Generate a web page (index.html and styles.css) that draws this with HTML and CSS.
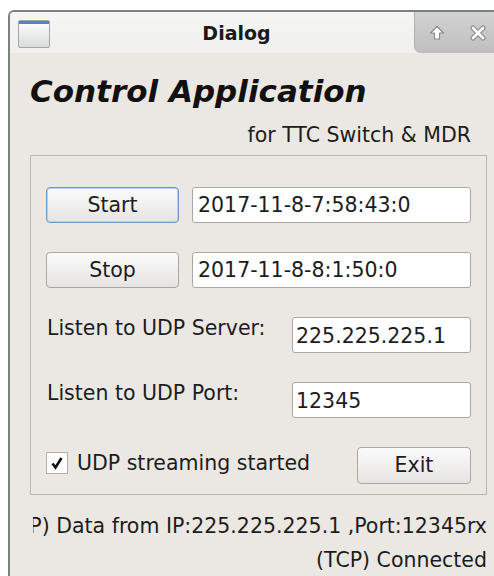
FILE: index.html
```html
<!DOCTYPE html>
<html>
<head>
<meta charset="utf-8">
<link rel="stylesheet" href="styles.css">
<title>Dialog</title>
</head>
<body>
<div class="window">
  <div class="titlebar">
    <svg class="app-icon" width="32" height="28" viewBox="0 0 32 28">
      <defs>
        <linearGradient id="ig" x1="0" y1="0" x2="0" y2="1">
          <stop offset="0" stop-color="#ffffff"/>
          <stop offset="1" stop-color="#d9dadb"/>
        </linearGradient>
      </defs>
      <rect x="0.5" y="0.5" width="31" height="27" rx="1.5" fill="url(#ig)" stroke="#a3a5a7"/>
      <rect x="1" y="1" width="30" height="3" fill="#5a80c4"/>
    </svg>
    <div class="title">Dialog</div>
    <div class="tab">
      <svg width="16" height="16" viewBox="0 0 16 16">
        <path d="M8 1.5 L14.5 8 L10.5 8 L10.5 14 L5.5 14 L5.5 8 L1.5 8 Z" fill="#ffffff" stroke="#8a8a8a" stroke-width="1.2" stroke-linejoin="round"/>
      </svg>
      <svg width="16" height="16" viewBox="0 0 16 16">
        <path d="M3 3 L13 13 M13 3 L3 13" stroke="#8d8d8d" stroke-width="5" stroke-linecap="round"/>
        <path d="M3 3 L13 13 M13 3 L3 13" stroke="#ffffff" stroke-width="2.6" stroke-linecap="round"/>
      </svg>
    </div>
  </div>
  <div class="content">
    <h1 class="heading">Control Application</h1>
    <div class="subtitle">for TTC Switch &amp; MDR</div>
    <div class="group">
      <div class="row">
        <div class="button default">Start</div>
        <div class="edit">2017-11-8-7:58:43:0</div>
      </div>
      <div class="row">
        <div class="button">Stop</div>
        <div class="edit">2017-11-8-8:1:50:0</div>
      </div>
      <div class="row">
        <div class="label">Listen to UDP Server:</div>
        <div class="edit short">225.225.225.1</div>
      </div>
      <div class="row">
        <div class="label">Listen to UDP Port:</div>
        <div class="edit short">12345</div>
      </div>
      <div class="row">
        <div class="check">
          <span class="box">
            <svg width="14" height="14" viewBox="0 0 14 14">
              <path d="M2.5 7.5 L5.5 11.5 L11.5 2" fill="none" stroke="#111" stroke-width="2.6" stroke-linejoin="miter"/>
            </svg>
          </span>
          <span class="check-text">UDP streaming started</span>
        </div>
        <div class="button exit">Exit</div>
      </div>
    </div>
    <div class="status">
      <div class="status-line"><span>(UDP) Data from IP:225.225.225.1 ,Port:12345rx</span></div>
      <div class="status-line"><span>(TCP) Connected</span></div>
    </div>
  </div>
</div>
</body>
</html>
```

FILE: styles.css
```css
html, body {
  margin: 0;
  padding: 0;
  background: #ffffff;
  overflow: hidden;
}

body {
  font-family: "DejaVu Sans", sans-serif;
  color: #1c1c1c;
}

.window {
  margin: 10px 0 0 8px;
  width: 484px;
  height: 580px;
  border-left: 2px solid #79837d;
  border-top: 2px solid #79837d;
  border-top-left-radius: 6px;
  background: #ebe8e4;
  overflow: hidden;
}

/* title bar */
.titlebar {
  display: flex;
  height: 41px;
  background: linear-gradient(#f5f5f4, #efefee);
}

.app-icon {
  margin: 8px 0 0 8px;
  flex: none;
}

.title {
  flex: 1;
  padding-left: 9px;
  text-align: center;
  font-weight: bold;
  font-size: 19px;
  line-height: 42px;
  color: #1a1a1a;
}

.tab {
  width: 80px;
  flex: none;
  display: flex;
  align-items: center;
  gap: 25px;
  padding-left: 14px;
  box-sizing: border-box;
  background: linear-gradient(#d2d2d2, #bfbfbf);
  border-left: 1px solid #b0b0b0;
  border-bottom-left-radius: 7px;
}

/* dialog body */
.content {
  padding: 20px 0 0 20px;
}

.heading {
  margin: 0;
  font-size: 31px;
  line-height: 36px;
  font-weight: bold;
  font-style: italic;
  color: #111;
}

.subtitle {
  margin-top: 14px;
  width: 441px;
  text-align: right;
  font-size: 20.5px;
  line-height: 24px;
}

.group {
  margin-top: 8px;
  width: 457px;
  box-sizing: border-box;
  border: 1px solid #bbb7b1;
  padding: 31px 15px 10px 15px;
  display: flex;
  flex-direction: column;
  gap: 29px;
}

.row {
  display: flex;
  align-items: center;
  height: 36px;
  gap: 13px;
}

.row:last-child {
  height: 37px;
}

.button {
  width: 133px;
  height: 36px;
  box-sizing: border-box;
  flex: none;
  border: 1px solid #aaa7a2;
  border-radius: 4px;
  background: linear-gradient(#fbfbfb, #e5e4e2);
  font-size: 20.5px;
  line-height: 34px;
  text-align: center;
}

.button.default {
  border-color: #6b98c6;
  box-shadow: inset 0 0 0 1px #b9d0e8;
}

.button.exit {
  width: 114px;
  height: 37px;
  line-height: 35px;
}

.edit {
  flex: 1;
  height: 36px;
  box-sizing: border-box;
  border: 1px solid #aba8a3;
  border-radius: 3px;
  background: #ffffff;
  padding-left: 5px;
  font-size: 20.5px;
  line-height: 34px;
}

.edit.short {
  flex: none;
  width: 179px;
  padding-left: 3px;
  line-height: 37px;
}

.label {
  flex: 1;
  font-size: 20.5px;
  line-height: 24px;
  padding-left: 1px;
  margin-bottom: 14px;
}

.check {
  flex: 1;
  display: flex;
  align-items: center;
  gap: 9px;
  margin-bottom: 6px;
}

.box {
  width: 22px;
  height: 22px;
  box-sizing: border-box;
  border: 1px solid #b3b0ab;
  background: #ffffff;
  display: flex;
  align-items: center;
  justify-content: center;
}

.check-text {
  font-size: 20.5px;
  line-height: 24px;
}

/* status lines under the group box; the long line is clipped on its left */
.status {
  margin: 19px 0 0 3px;
  width: 454px;
  display: flex;
  flex-direction: column;
  gap: 10px;
}

.status-line {
  display: flex;
  justify-content: flex-end;
  overflow: hidden;
  font-size: 20.5px;
  line-height: 24px;
  white-space: nowrap;
}

.status-line span {
  flex: none;
}
```
